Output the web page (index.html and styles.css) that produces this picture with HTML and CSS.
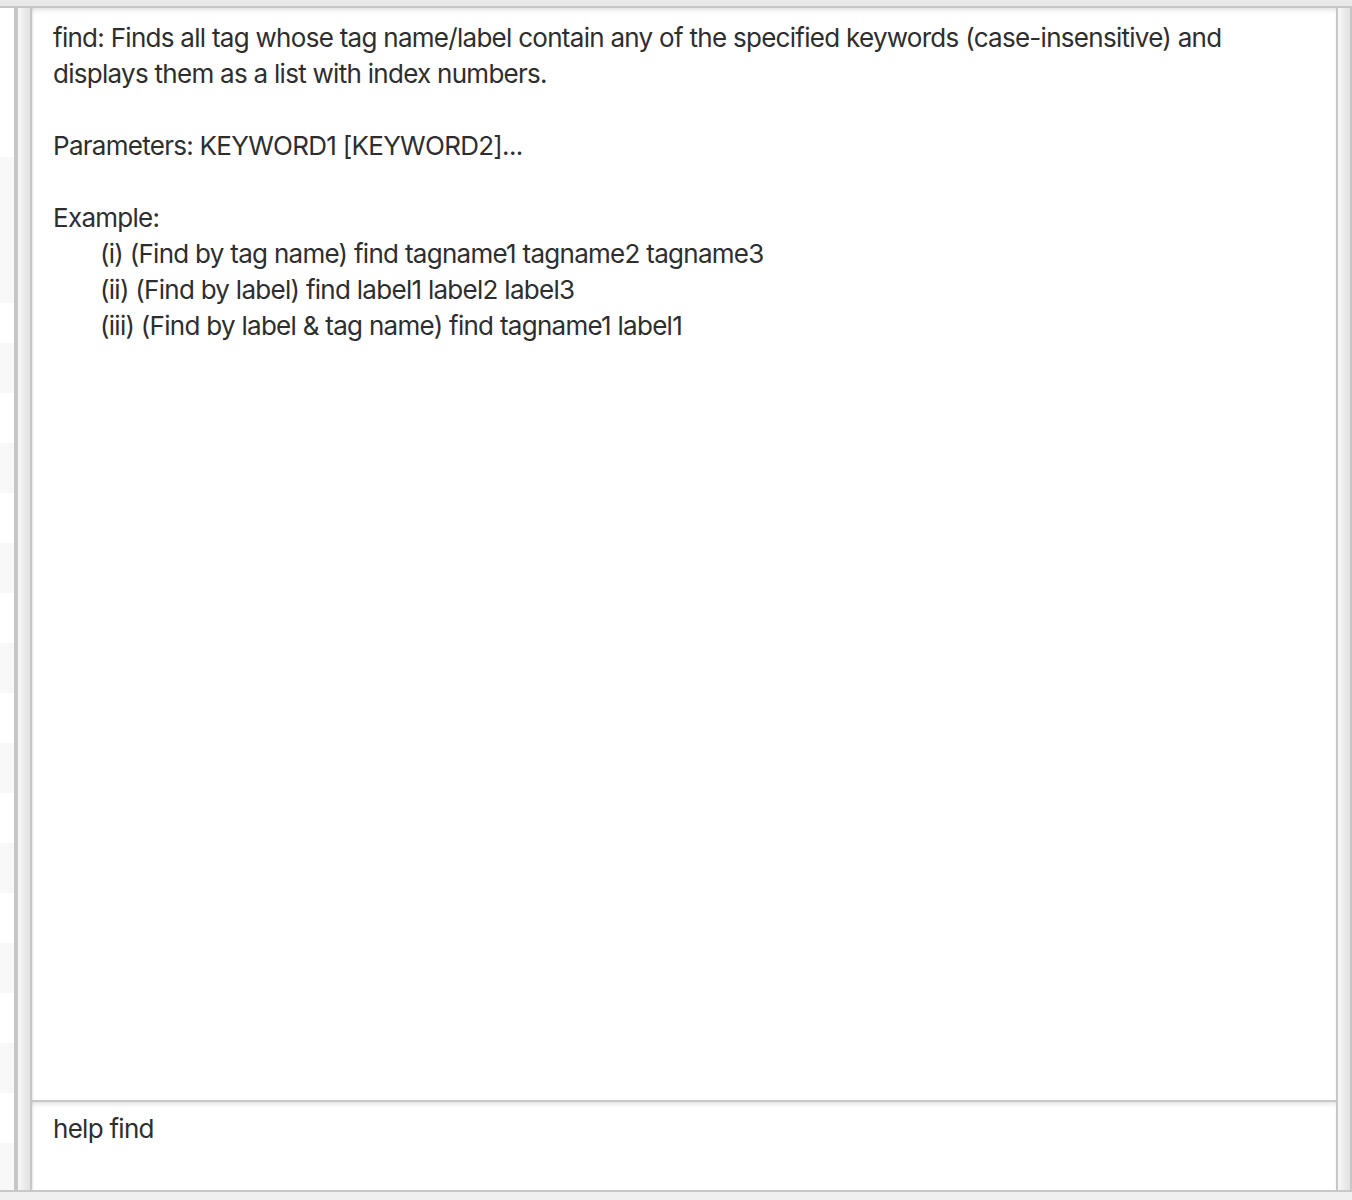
FILE: index.html
```html
<!DOCTYPE html>
<html>
<head>
<meta charset="utf-8">
<link rel="stylesheet" href="styles.css">
</head>
<body>
<div class="app">
  <div class="topbar"></div>
  <div class="main">
    <div class="left-list">
      <div class="row first"></div>
      <div class="row alt tall"></div>
      <div class="row short"></div>
      <div class="row alt"></div><div class="row"></div><div class="row alt"></div><div class="row"></div>
      <div class="row alt"></div><div class="row"></div><div class="row alt"></div><div class="row"></div>
      <div class="row alt"></div><div class="row"></div><div class="row alt"></div><div class="row"></div>
      <div class="row alt"></div><div class="row"></div><div class="row alt"></div><div class="row"></div>
      <div class="row alt"></div><div class="row"></div><div class="row alt"></div><div class="row"></div>
    </div>
    <div class="divider left-div"></div>
    <div class="center">
      <div class="result">
        <div class="line">find: Finds all tag whose tag name/label contain any of the specified keywords (case-insensitive) and</div>
        <div class="line">displays them as a list with index numbers.</div>
        <div class="line blank"></div>
        <div class="line">Parameters: KEYWORD1 [KEYWORD2]...</div>
        <div class="line blank"></div>
        <div class="line">Example:</div>
        <div class="line indent">(i) (Find by tag name) find tagname1 tagname2 tagname3</div>
        <div class="line indent">(ii) (Find by label) find label1 label2 label3</div>
        <div class="line indent">(iii) (Find by label &amp; tag name) find tagname1 label1</div>
      </div>
      <div class="command">
        <div class="line">help find</div>
      </div>
    </div>
    <div class="divider right-div"></div>
  </div>
  <div class="bottombar"></div>
</div>
</body>
</html>
```
FILE: styles.css
```css
html, body {
  margin: 0;
  padding: 0;
  background: #f2f2f2;
}
*, *::before, *::after {
  box-sizing: border-box;
}
.app {
  width: 1352px;
  height: 1200px;
  display: flex;
  flex-direction: column;
  font-family: Inter, "Open Sans", "Liberation Sans", sans-serif;
  color: #333333;
}
.topbar {
  height: 8px;
  background: #e9e9e9;
  border-bottom: 2px solid #c6c6c6;
  flex: none;
}
.main {
  flex: 1;
  display: flex;
  min-height: 0;
}
.left-list {
  width: 14px;
  flex: none;
  background: #ffffff;
  overflow: hidden;
}
.row {
  height: 50px;
  background: #ffffff;
}
.row.first {
  height: 149px;
}
.row.tall {
  height: 146px;
}
.row.short {
  height: 40px;
}
.row.alt {
  background: #f8f8f8;
}
.divider {
  flex: none;
  background: linear-gradient(to right, #f7f7f7, #e2e2e2);
}
.left-div {
  width: 18px;
  border-left: 4px solid #c6c6c6;
  border-right: 2px solid #c6c6c6;
}
.right-div {
  width: 16px;
  border-left: 2px solid #c6c6c6;
  border-right: 2px solid #c6c6c6;
}
.center {
  flex: 1;
  display: flex;
  flex-direction: column;
  min-width: 0;
}
.result {
  flex: 1;
  background: #ffffff;
  box-shadow: inset 0 4px 5px -2px rgba(0,0,0,0.12), inset 2px 0 2px -1px rgba(0,0,0,0.08);
  padding: 12px 20px 0 21px;
  border-bottom: 2px solid #c8c8c8;
}
.command {
  height: 88px;
  flex: none;
  background: #ffffff;
  box-shadow: inset 0 4px 5px -2px rgba(0,0,0,0.12), inset 2px 0 2px -1px rgba(0,0,0,0.08);
  padding: 9px 20px 0 21px;
}
.line {
  font-size: 26px;
  line-height: 36px;
  height: 36px;
  white-space: nowrap;
  letter-spacing: -0.72px;
  color: #2e2e2e;
}
.indent {
  padding-left: 47px;
}
.bottombar {
  height: 10px;
  flex: none;
  background: #f0f0f0;
  border-top: 2px solid #c8c8c8;
}
```
